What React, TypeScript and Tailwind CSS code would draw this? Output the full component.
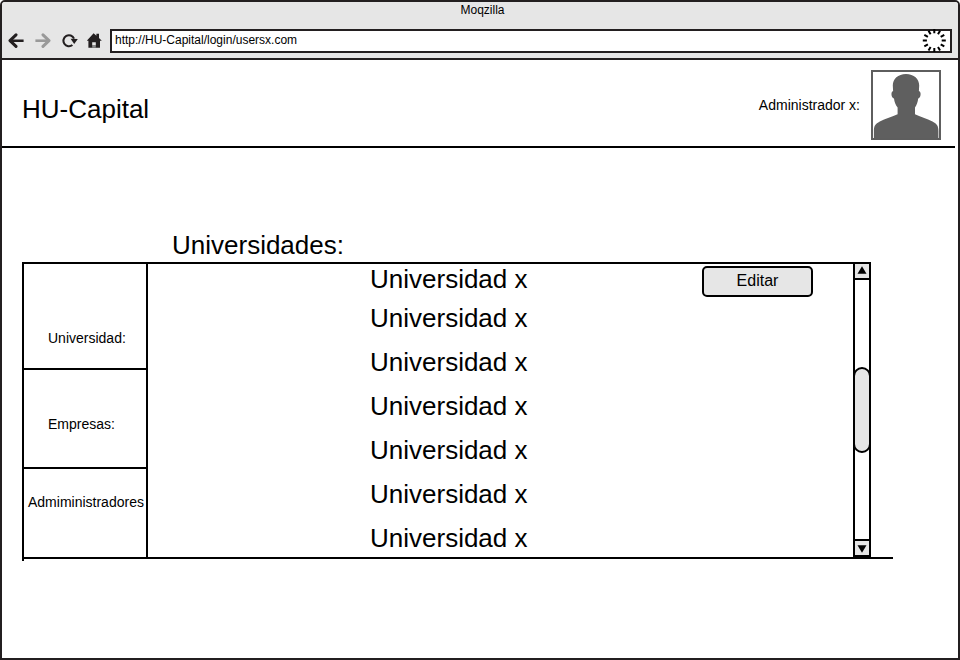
import React from "react";

const rows = ["h-[39px]", "h-[44px]", "h-[44px]", "h-[44px]", "h-[44px]", "h-[44px]", "h-[34px]"];

function BackArrow({ color }: { color: string }) {
  return (
    <svg width="16" height="16" viewBox="0 0 16 16" fill="none" stroke={color} strokeWidth="3">
      <path d="M8 1.8 L2 7.6 L8 13.4" strokeLinejoin="round" strokeLinecap="round" />
      <path d="M2 7.7 H15.6" strokeWidth="2.6" />
    </svg>
  );
}

function Reload() {
  return (
    <svg width="16" height="16" viewBox="0 0 16 16">
      <path d="M10.4 12 A5.5 5.5 0 1 1 12 5.6" fill="none" stroke="#231f20" strokeWidth="2.1" />
      <path d="M8.6 5.8 L15.8 6 L12.2 11 Z" fill="#231f20" />
    </svg>
  );
}

function Home() {
  return (
    <svg width="16" height="16" viewBox="0 0 16 16" fill="#231f20">
      <path d="M0.8 7.8 L7.6 0.2 L10.4 2.8 V0.8 H13 V5 L15.8 7.8 H14 V14.8 H2.4 V7.8 Z" />
      <path d="M6.2 9.2 H9.8 V12.6 H6.2 Z" fill="#e6e6e6" />
      <path d="M6.2 12.6 H9.8 V14.8 H6.2 Z" fill="#8c8c8c" />
    </svg>
  );
}

function Spinner() {
  return (
    <svg className="-mt-px overflow-visible" width="24" height="22" viewBox="-12 -11 24 22" stroke="#000" strokeWidth="2">
      {[0, 30, 60, 90, 120, 150, 180, 210, 240, 270, 300, 330].map((a) => (
        <path key={a} d="M7.4 0 H11.5" transform={`translate(0.3 -0.4) rotate(${a})`} />
      ))}
    </svg>
  );
}

function Avatar() {
  return (
    <div className="mt-[10px] h-[70px] w-[70px] border-2 border-[#5e5e5e]">
      <svg width="66" height="66" viewBox="2 2 66 66" fill="#5f5f5f">
        <path d="M35 4 C43 4 48.2 9 48.2 15.5 L47.9 21 C50.4 21.3 50.2 27.8 47.2 28.6 C46.8 32 45.8 35 44 37.5 V44.3 C49 46.6 56 48.6 61.5 51.6 C66 54 67.4 56 67.4 61 V68 H2.9 V61 C2.9 56 4.3 54 8.8 51.6 C14 48.6 21.5 46.6 26.6 44.3 V37.5 C24.5 35 23.4 32 23 28.6 C19.9 27.8 19.7 21.3 22.1 21 L21.8 15.5 C21.8 9 27 4 35 4 Z" />
      </svg>
    </div>
  );
}

function Scrollbar() {
  return (
    <div className="flex h-[295px] w-[18px] flex-col border-2 border-black">
      <div className="flex h-[16px] shrink-0 justify-center border-b-2 border-black bg-[#e6e6e6] pt-[2px]">
        <svg width="10" height="8" viewBox="0 0 10 8"><path d="M5 0.2 L9.5 7.8 H0.5 Z" /></svg>
      </div>
      <div className="-mx-[2px] grow pt-[87px]">
        <div className="h-[86px] w-[18px] rounded-[9px] border-2 border-black bg-[#e6e6e6]" />
      </div>
      <div className="flex h-[16px] shrink-0 justify-center border-t-2 border-black bg-[#e6e6e6] pt-[4px]">
        <svg width="10" height="8" viewBox="0 0 10 8"><path d="M5 7.8 L9.5 0.2 H0.5 Z" /></svg>
      </div>
    </div>
  );
}

export default function App() {
  return (
    <div className="h-[660px] w-[960px] bg-white font-['Liberation_Sans',Arial,sans-serif] text-black">
      <div className="h-[660px] overflow-hidden rounded-t-[5px] border-2 border-[#231f20]">
        <div className="h-[58px] border-b-2 border-[#231f20] bg-[#e6e6e6]">
          <div className="h-[27px] pl-[5px] pt-px text-center text-[12px] leading-[14px]">Moqzilla</div>
          <div className="flex h-6 items-center">
            <div className="ml-[6px]"><BackArrow color="#231f20" /></div>
            <div className="ml-[11px] -scale-x-100"><BackArrow color="#999999" /></div>
            <div className="ml-[11px]"><Reload /></div>
            <div className="ml-[8px]"><Home /></div>
            <div className="ml-2 flex h-6 w-[842px] justify-between border-2 border-[#231f20] bg-white px-[3px] pr-1">
              <span className="pt-[2px] text-[12px] leading-[14px]">http://HU-Capital/login/usersx.com</span>
              <Spinner />
            </div>
          </div>
        </div>

        <header className="flex h-[88px] w-[953px] border-b-2 border-black pl-5 pr-[14px]">
          <h1 className="mt-[34px] grow text-[26px] leading-[30px]">HU-Capital</h1>
          <span className="mr-[11px] mt-[37px] text-[14px] leading-[16px]">Administrador x:</span>
          <Avatar />
        </header>

        <main className="pl-5">
          <h2 className="ml-[150px] mt-[82px] h-[32px] text-[26px] leading-[30px]">Universidades:</h2>
          <div className="w-[871px]">
            <div className="flex h-[295px]">
              <nav className="flex w-[126px] shrink-0 flex-col border-x-2 border-t-2 border-black text-[14px] leading-[16px]">
                <div className="h-[106px] border-b-2 border-black pl-6 pt-[66px]">Universidad:</div>
                <div className="h-[99px] border-b-2 border-black pl-6 pt-[46px]">Empresas:</div>
                <div className="whitespace-nowrap pl-1 pt-[25px]">Admiministradores</div>
              </nav>
              <div className="flex w-[705px] shrink-0 border-t-2 border-black">
                <ul className="w-[554px] pl-[222px] text-[26px] leading-[30px]">
                  {rows.map((h, i) => (
                    <li key={i} className={h}>Universidad x</li>
                  ))}
                </ul>
                <button className="mt-[2px] h-[31px] w-[111px] rounded-[5px] border-2 border-black bg-[#e6e6e6] pb-[2px] text-[16px] leading-[18px]">
                  Editar
                </button>
              </div>
              <Scrollbar />
            </div>
            <div className="h-[2px] bg-black" />
            <div className="h-[2px] w-[2px] bg-black" />
          </div>
        </main>
      </div>
    </div>
  );
}
